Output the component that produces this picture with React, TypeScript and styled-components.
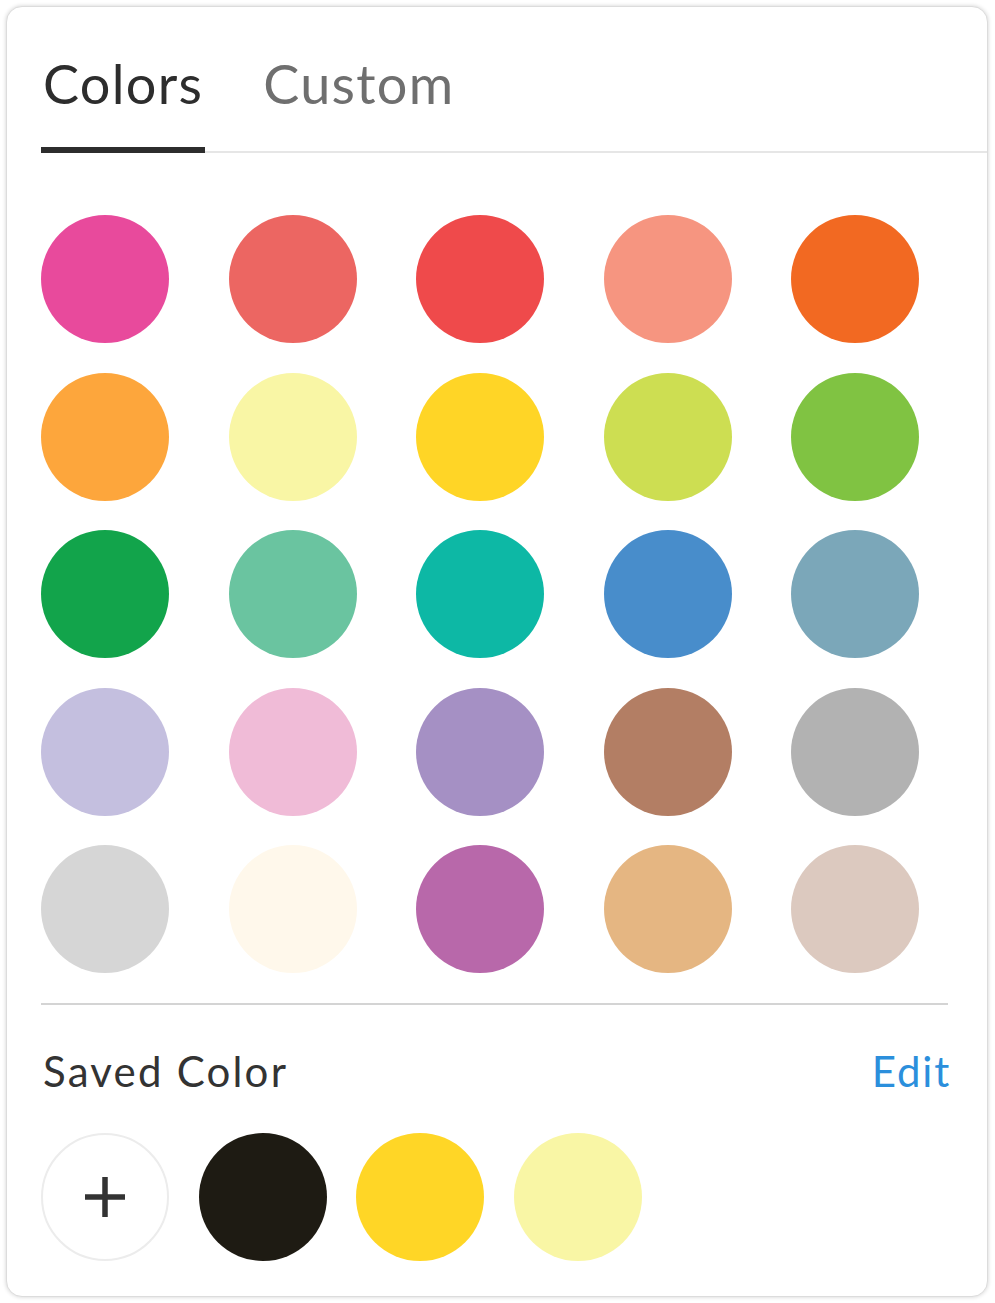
import styled, { createGlobalStyle } from 'styled-components'

const GlobalStyle = createGlobalStyle`
    body {
        margin: 0;
        background: #ffffff;
        font-family: Lato, "Open Sans", sans-serif;
    }
`

const palette = [
    '#E84A9C', '#EC6662', '#EF4A4B', '#F69580', '#F26922',
    '#FDA63C', '#F9F6A5', '#FFD526', '#CDDE52', '#80C342',
    '#12A44B', '#6AC4A0', '#0DB8A5', '#488DCB', '#7BA7B9',
    '#C4BFDF', '#F0BBD7', '#A590C4', '#B37E64', '#B2B2B2',
    '#D6D6D6', '#FFF8EB', '#B868AA', '#E5B682', '#DCC9BF',
]

const saved = ['#1E1B13', '#FFD626', '#F9F6A5']

function App() {
    return (
        <>
            <GlobalStyle />
            <Card>
                <Tabs>
                    <Tab $active>Colors</Tab>
                    <Tab>Custom</Tab>
                </Tabs>
                <Body>
                    <Grid>
                        {palette.map((c, i) => (
                            <Swatch key={i} $color={c} />
                        ))}
                    </Grid>
                    <Divider />
                    <SavedHeader>
                        <SavedTitle>Saved Color</SavedTitle>
                        <EditLink>Edit</EditLink>
                    </SavedHeader>
                    <SavedRow>
                        <AddButton>
                            <svg width="44" height="44" viewBox="0 0 44 44">
                                <path d="M22 2 V42 M2 22 H42" stroke="#333" strokeWidth="5.5" />
                            </svg>
                        </AddButton>
                        {saved.map((c, i) => (
                            <Swatch key={i} $color={c} />
                        ))}
                    </SavedRow>
                </Body>
            </Card>
        </>
    )
}

export default App

const Card = styled.div`
    margin: 6px;
    width: 982px;
    height: 1291px;
    box-sizing: border-box;
    background: #fff;
    border: 1px solid #dcdcdc;
    border-radius: 16px;
    box-shadow: 0 0 4px rgba(0, 0, 0, 0.18);
    display: flex;
    flex-direction: column;
    overflow: hidden;
`

const Tabs = styled.div`
    display: flex;
    gap: 56px;
    margin-left: 34px;
    padding-top: 45px;
    border-bottom: 2px solid #e6e6e6;
`

const Tab = styled.div<{ $active?: boolean }>`
    font-size: 54px;
    line-height: 64px;
    letter-spacing: 1.3px;
    color: ${p => (p.$active ? '#2d2d2d' : '#6f6f6f')};
    padding: 0 2px 31px;
    margin-bottom: -2px;
    border-bottom: 6px solid ${p => (p.$active ? '#2d2d2d' : 'transparent')};
`

const Body = styled.div`
    padding: 62px 39px 0 34px;
    display: flex;
    flex-direction: column;
`

const Grid = styled.div`
    display: grid;
    grid-template-columns: repeat(5, 128px);
    column-gap: 59.5px;
    row-gap: 29.5px;
`

const Swatch = styled.div<{ $color: string }>`
    width: 128px;
    height: 128px;
    border-radius: 50%;
    background: ${p => p.$color};
`

const Divider = styled.div`
    height: 2px;
    background: #d4d4d4;
    margin-top: 30px;
`

const SavedHeader = styled.div`
    display: flex;
    justify-content: space-between;
    align-items: baseline;
    margin-top: 40px;
`

const SavedTitle = styled.div`
    font-size: 42px;
    line-height: 52px;
    letter-spacing: 2.2px;
    color: #333;
    padding-left: 2px;
`

const EditLink = styled.a`
    font-size: 42px;
    line-height: 52px;
    letter-spacing: 1.8px;
    margin-right: -3px;
    color: #2b8fdc;
    cursor: pointer;
`

const SavedRow = styled.div`
    display: flex;
    gap: 29.5px;
    margin-top: 36px;
`

const AddButton = styled.div`
    width: 128px;
    height: 128px;
    box-sizing: border-box;
    border-radius: 50%;
    border: 2px solid #ececec;
    display: flex;
    align-items: center;
    justify-content: center;
`
